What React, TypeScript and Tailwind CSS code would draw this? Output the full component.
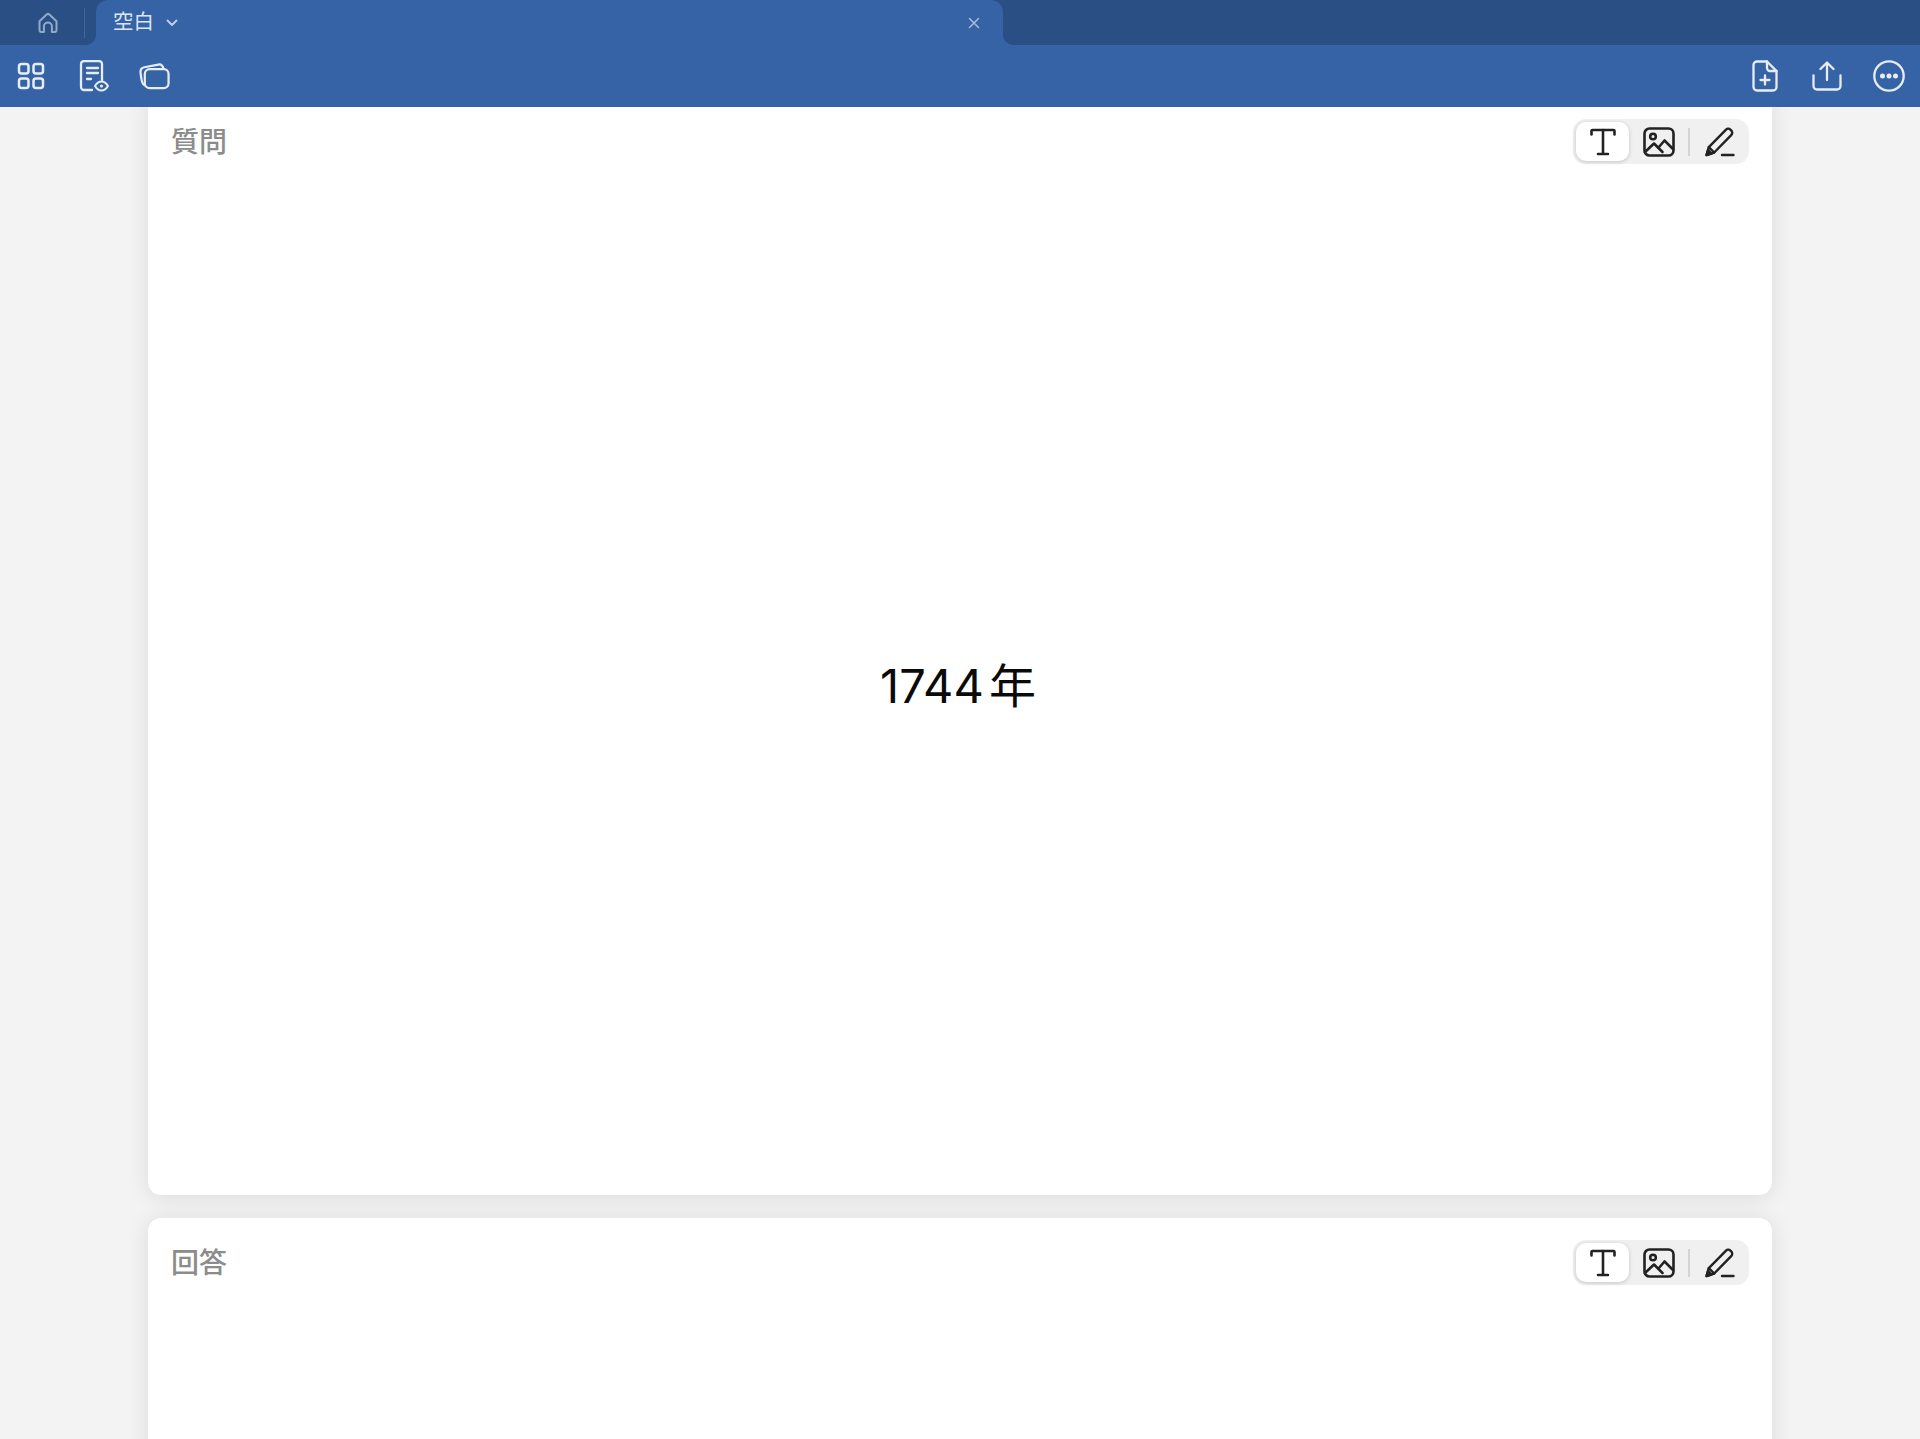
const FONT = "font-['Inter','Noto_Sans_CJK_JP',sans-serif]"

const HomeIcon = () => (
  <svg width="22" height="22" viewBox="0 0 22 22" fill="none" stroke="#93a9c9" strokeWidth="2" strokeLinejoin="round" strokeLinecap="round">
    <path d="M2.500 9.200 9.600 2.600a2 2 0 0 1 2.800 0l7.100 6.600V18a2 2 0 0 1-2 2h-2.600v-5.500a4 4 0 0 0-8 0V20H4.500a2 2 0 0 1-2-2Z" />
  </svg>
)

const GridIcon = () => (
  <svg width="28" height="28" viewBox="0 0 28 28" fill="none" stroke="#e6edf6" strokeWidth="2.500">
    <rect x="2" y="2" width="9.500" height="9.500" rx="2.500" />
    <rect x="16.500" y="2" width="9.500" height="9.500" rx="2.500" />
    <rect x="2" y="16.500" width="9.500" height="9.500" rx="2.500" />
    <rect x="16.500" y="16.500" width="9.500" height="9.500" rx="2.500" />
  </svg>
)

const DocEyeIcon = () => (
  <svg width="30" height="32" viewBox="0 0 30 32" fill="none" stroke="#e6edf6" strokeWidth="2.300" strokeLinecap="round" strokeLinejoin="round">
    <path d="M13 30H5a3 3 0 0 1-3-3V4a3 3 0 0 1 3-3h15a3 3 0 0 1 3 3v16" />
    <path d="M8 8h11M8 13h11M8 19h4" />
    <path d="M16 26c1.800-3 4-4.500 6.500-4.500S27.200 23 29 26c-1.800 3-4 4.500-6.500 4.500S17.800 29 16 26Z" strokeWidth="2" />
    <circle cx="22.500" cy="26" r="1.600" fill="#e6edf6" stroke="none" />
  </svg>
)

const CardsIcon = () => (
  <svg width="31" height="28" viewBox="0 0 32 28" fill="none" stroke="#e6edf6" strokeWidth="2.300" strokeLinejoin="round">
    <rect x="6" y="7" width="24.500" height="19.500" rx="5" />
    <path d="M6.200 23.500C3.500 23.500 2.800 20 2.200 15.500L1.600 10.500C1.300 7.500 3 5.500 5.500 5L20 2.200c2.500-.5 4.500.8 5.500 4.800" />
  </svg>
)

const FilePlusIcon = () => (
  <svg width="26" height="32" viewBox="0 0 26 32" fill="none" stroke="#e6edf6" strokeWidth="2.300" strokeLinecap="round" strokeLinejoin="round">
    <path d="M15 1.500H5a3.500 3.500 0 0 0-3.500 3.500v22A3.500 3.500 0 0 0 5 30.500h16a3.500 3.500 0 0 0 3.500-3.500V11Z" />
    <path d="M15 1.500V8a3 3 0 0 0 3 3h6.500" />
    <path d="M13 15.500v9M8.500 20h9" />
  </svg>
)

const ShareIcon = () => (
  <svg width="30" height="30" viewBox="0 0 30 30" fill="none" stroke="#e6edf6" strokeWidth="2.300" strokeLinecap="round" strokeLinejoin="round">
    <path d="M15 19V2M8.500 8 15 1.500 21.500 8" />
    <path d="M1.500 14.500V25a3.500 3.500 0 0 0 3.500 3.500h20a3.500 3.500 0 0 0 3.500-3.500V14.500" />
  </svg>
)

const MoreIcon = () => (
  <svg width="32" height="32" viewBox="0 0 32 32" fill="none" stroke="#e6edf6" strokeWidth="2.300">
    <circle cx="16" cy="16" r="14.700" />
    <circle cx="9.500" cy="16" r="2.500" fill="#e6edf6" stroke="none" />
    <circle cx="16" cy="16" r="2.500" fill="#e6edf6" stroke="none" />
    <circle cx="22.500" cy="16" r="2.500" fill="#e6edf6" stroke="none" />
  </svg>
)

const TextIcon = () => (
  <svg width="26" height="28" viewBox="0 0 26 28" fill="none" stroke="#222222" strokeWidth="2.600" strokeLinecap="round" strokeLinejoin="round">
    <path d="M1.500 6.500V3a1 1 0 0 1 1-1h21a1 1 0 0 1 1 1v3.500" />
    <path d="M13 2v24M8 26h10" />
  </svg>
)

const ImageIcon = () => (
  <svg width="32" height="30" viewBox="0 0 32 30" fill="none" stroke="#222222" strokeWidth="2.600" strokeLinejoin="round" strokeLinecap="round">
    <rect x="1.500" y="1.500" width="29" height="27" rx="5" />
    <circle cx="10" cy="9.500" r="2.800" />
    <path d="M2 25 11 16.500 19.500 25" />
    <path d="M15.500 20.500 21.500 13.500 30 22" />
  </svg>
)

const PenIcon = () => (
  <svg width="32" height="32" viewBox="0 0 32 32" fill="none" stroke="#222222" strokeWidth="2.400" strokeLinejoin="round" strokeLinecap="round">
    <path d="M2.500 29 4.800 21.200 21.800 3.800a3.400 3.400 0 0 1 4.800 0l.6.6a3.400 3.400 0 0 1 0 4.800L10.200 26.500Z" />
    <path d="M4.800 21.200 10.200 26.500" />
    <path d="M2.500 29 7.500 27.500 4 24Z" fill="#222222" />
    <path d="M18 29h11.500" />
  </svg>
)

const EditorTools = () => (
  <div className="flex h-[45px] w-[176px] items-center rounded-[13px] bg-[#f0f0f0] pl-[3px]">
    <div className="flex h-[39px] w-[53px] items-center justify-center rounded-[10px] bg-white shadow-[0_1px_4px_rgba(0,0,0,0.18)]">
      <TextIcon />
    </div>
    <div className="ml-[14px] flex w-[32px] justify-center">
      <ImageIcon />
    </div>
    <div className="ml-[13px] h-[28px] w-[2px] bg-[#d4d4d4]" />
    <div className="ml-[14px] flex w-[32px] justify-center">
      <PenIcon />
    </div>
  </div>
)

const Side = ({ label, value }: { label: string; value?: string }) => (
  <section className="relative h-[1098px] w-[1624px] shrink-0 rounded-[13px] bg-white shadow-[0_2px_22px_rgba(0,0,0,0.1)]">
    <div className="flex items-start justify-between pt-[22px] pr-[23px] pl-[23px]">
      <h2 className="pt-[3px] text-[28px] leading-[40px] font-medium text-[#8c8c8c]">{label}</h2>
      <EditorTools />
    </div>
    {value && (
      <div className="mt-[14px] flex h-[1018px] items-center justify-center pr-[4px] pb-[4px] text-[47px] leading-none text-[#0a0a0a] [word-spacing:-8px]">
        {value}
      </div>
    )}
  </section>
)

export default function App() {
  return (
    <div className={`${FONT} flex h-[1439px] w-[1920px] flex-col overflow-hidden bg-[#f3f3f3]`}>
      {/* Tabs + toolbar */}
      <header className="relative z-10 shrink-0 bg-[#3563a6] shadow-[0_0_0_1px_rgba(255,255,255,0.15)]">
        <div className="flex h-[45px]">
          <div className="flex w-[96px] items-center rounded-br-[10px] bg-[#2a4f85]">
            <div className="ml-[37px]">
              <HomeIcon />
            </div>
            <div className="ml-[25px] h-[30px] w-px bg-[#44679b]" />
          </div>
          <div className="w-[907px] bg-[#2a4f85]">
            <div className="flex h-[45px] items-center rounded-t-[12px] bg-[#3563a6] pr-[23px] pl-[17px]">
              <span className="text-[20.500px] leading-none text-[#dce5f1]">空白</span>
              <svg className="ml-[12px]" width="12" height="8" viewBox="0 0 12 8" fill="none" stroke="#c6d3e6" strokeWidth="1.800" strokeLinecap="round" strokeLinejoin="round">
                <path d="M1.500 1.500 6 6l4.500-4.500" />
              </svg>
              <svg className="ml-auto" width="12" height="12" viewBox="0 0 12 12" fill="none" stroke="#a9bcd8" strokeWidth="1.500" strokeLinecap="round">
                <path d="M1.500 1.500l9 9M10.500 1.500l-9 9" />
              </svg>
            </div>
          </div>
          <div className="flex-1 rounded-bl-[10px] bg-[#2a4f85]" />
        </div>
        <div className="flex h-[62px] items-center justify-between pr-[15px] pl-[17px]">
          <div className="flex items-center">
            <GridIcon />
            <div className="ml-[34px]">
              <DocEyeIcon />
            </div>
            <div className="ml-[30px]">
              <CardsIcon />
            </div>
          </div>
          <div className="flex items-center">
            <FilePlusIcon />
            <div className="ml-[34px]">
              <ShareIcon />
            </div>
            <div className="ml-[31px]">
              <MoreIcon />
            </div>
          </div>
        </div>
      </header>

      {/* Flashcard sides, scrolled slightly under the header */}
      <main className="flex min-h-0 flex-1 flex-col items-center overflow-hidden">
        <div className="-mt-[10px] flex flex-col gap-[23px]">
          <Side label="質問" value="1744 年" />
          <Side label="回答" />
        </div>
      </main>
    </div>
  )
}
